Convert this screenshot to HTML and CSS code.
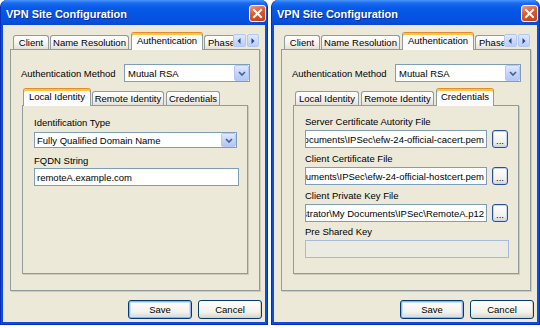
FILE: index.html
```html
<!DOCTYPE html>
<html lang="en">
<head>
  <meta charset="UTF-8">
  <title>VPN Site Configuration</title>
  <link rel="stylesheet" href="styles.css">
</head>
<body>
  <!-- Local identity page -->
  <div class="dialog">
    <div class="titlebar">
      <span class="title">VPN Site Configuration</span>
      <div class="close">
        <svg width="11" height="11" viewBox="0 0 11 11"><path d="M2 2 L9 9 M9 2 L2 9" stroke="#fff" stroke-width="2" stroke-linecap="square"/></svg>
      </div>
    </div>
    <div class="window-body">
      <div class="tabs">
        <div class="tab t-client">Client</div>
        <div class="tab t-name">Name Resolution</div>
        <div class="tab t-auth active">Authentication</div>
        <div class="tab t-phase">Phase 1</div>
        <div class="scroller">
          <span><svg width="4" height="6" viewBox="0 0 4 6"><path d="M3.5 0 L0.5 3 L3.5 6 Z" fill="#2f4380"/></svg></span>
          <span><svg width="4" height="6" viewBox="0 0 4 6"><path d="M0.5 0 L3.5 3 L0.5 6 Z" fill="#2f4380"/></svg></span>
        </div>
      </div>
      <div class="panel">
        <div class="method-row">
          <span>Authentication Method</span>
          <div class="combo method">
            <span>Mutual RSA</span>
            <div class="drop"><svg width="8" height="5" viewBox="0 0 8 5"><path d="M1 1 L4 4 L7 1" fill="none" stroke="#4d6185" stroke-width="1.7"/></svg></div>
          </div>
        </div>
        <div class="tabs inner">
          <div class="tab t-local active">Local Identity</div>
          <div class="tab t-remote">Remote Identity</div>
          <div class="tab t-cred">Credentials</div>
        </div>
        <div class="subpanel local">
          <div class="label">Identification Type</div>
          <div class="combo id-type">
            <span>Fully Qualified Domain Name</span>
            <div class="drop"><svg width="8" height="5" viewBox="0 0 8 5"><path d="M1 1 L4 4 L7 1" fill="none" stroke="#4d6185" stroke-width="1.7"/></svg></div>
          </div>
          <div class="label fqdn-label">FQDN String</div>
          <div class="textbox fqdn">remoteA.example.com</div>
        </div>
      </div>
      <div class="buttons">
        <button class="btn default">Save</button>
        <button class="btn">Cancel</button>
      </div>
    </div>
  </div>

  <!-- Credentials page -->
  <div class="dialog dlg-cred">
    <div class="titlebar">
      <span class="title">VPN Site Configuration</span>
      <div class="close">
        <svg width="11" height="11" viewBox="0 0 11 11"><path d="M2 2 L9 9 M9 2 L2 9" stroke="#fff" stroke-width="2" stroke-linecap="square"/></svg>
      </div>
    </div>
    <div class="window-body">
      <div class="tabs">
        <div class="tab t-client">Client</div>
        <div class="tab t-name">Name Resolution</div>
        <div class="tab t-auth active">Authentication</div>
        <div class="tab t-phase">Phase 1</div>
        <div class="scroller">
          <span><svg width="4" height="6" viewBox="0 0 4 6"><path d="M3.5 0 L0.5 3 L3.5 6 Z" fill="#2f4380"/></svg></span>
          <span><svg width="4" height="6" viewBox="0 0 4 6"><path d="M0.5 0 L3.5 3 L0.5 6 Z" fill="#2f4380"/></svg></span>
        </div>
      </div>
      <div class="panel">
        <div class="method-row">
          <span>Authentication Method</span>
          <div class="combo method">
            <span>Mutual RSA</span>
            <div class="drop"><svg width="8" height="5" viewBox="0 0 8 5"><path d="M1 1 L4 4 L7 1" fill="none" stroke="#4d6185" stroke-width="1.7"/></svg></div>
          </div>
        </div>
        <div class="tabs inner">
          <div class="tab t-local">Local Identity</div>
          <div class="tab t-remote">Remote Identity</div>
          <div class="tab t-cred active">Credentials</div>
        </div>
        <div class="subpanel creds">
          <div class="label">Server Certificate Autority File</div>
          <div class="file-row">
            <div class="textbox path"><span>C:\Documents and Settings\Administrator\My Documents\IPSec\efw-24-official-cacert.pem</span></div>
            <button class="browse">...</button>
          </div>
          <div class="label gap">Client Certificate File</div>
          <div class="file-row">
            <div class="textbox path"><span>C:\Documents and Settings\Administrator\My Documents\IPSec\efw-24-official-hostcert.pem</span></div>
            <button class="browse">...</button>
          </div>
          <div class="label gap">Client Private Key File</div>
          <div class="file-row">
            <div class="textbox path"><span>C:\Documents and Settings\Administrator\My Documents\IPSec\RemoteA.p12</span></div>
            <button class="browse">...</button>
          </div>
          <div class="label gap psk-label">Pre Shared Key</div>
          <div class="textbox disabled psk"></div>
        </div>
      </div>
      <div class="buttons">
        <button class="btn default">Save</button>
        <button class="btn">Cancel</button>
      </div>
    </div>
  </div>
</body>
</html>
```

FILE: styles.css
```css
/* Windows XP style dialogs */
* {
  margin: 0;
  padding: 0;
  box-sizing: border-box;
}

body {
  width: 540px;
  height: 328px;
  background: #fff;
  display: flex;
  gap: 3px;
  overflow: hidden;
  font-family: "Liberation Sans", Arial, sans-serif;
  font-size: 9.5px;
  color: #000;
}

.dialog {
  width: 268px;
  height: 325px;
  display: flex;
  flex-direction: column;
  background: #0a4ee0;
  border: 1px solid #0a2fb4;
  border-top: none;
  border-radius: 7px 7px 0 0;
  overflow: hidden;
}

.dlg-cred {
  width: 269px;
}

.titlebar {
  height: 25px;
  flex-shrink: 0;
  display: flex;
  align-items: center;
  justify-content: space-between;
  padding: 2px 2px 0 6px;
  margin: 0 -1px;
  background: linear-gradient(180deg, #4a97fa 0, #1a6cf0 3px, #0759e8 8px, #0454e4 16px, #0650dc 22px, #0a45cc 25px);
  color: #fff;
  font-size: 11px;
  font-weight: bold;
  text-shadow: 1px 1px 0 #0c2a90;
}

.close {
  width: 17px;
  height: 17px;
  border: 1px solid #fff;
  border-radius: 3px;
  background: linear-gradient(160deg, #ee9a7c, #dd5a30 45%, #c23c14);
  display: flex;
  align-items: center;
  justify-content: center;
}

.close svg {
  display: block;
}

.window-body {
  flex: 1;
  margin: 0 2px 2px;
  background: #ece9d8;
  padding: 7px 3px 0 7px;
  display: flex;
  flex-direction: column;
}

/* Tabs */
.tabs {
  display: flex;
  align-items: flex-end;
  height: 17px;
  padding-left: 3px;
  position: relative;
  z-index: 1;
}

.tab {
  height: 14px;
  border: 1px solid #919b9c;
  border-bottom: none;
  border-radius: 3px 3px 0 0;
  background: linear-gradient(#fff, #f4f3ee 55%, #e3e1d6);
  display: flex;
  align-items: center;
  justify-content: center;
  white-space: nowrap;
  overflow: hidden;
}

.tab.active {
  height: 18px;
  margin-bottom: -1px;
  padding-bottom: 2px;
  background: #fcfcfe;
  border-top: 1px solid #e68b2c;
  box-shadow: inset 0 2px 0 #ffc83c;
}

.t-client { width: 36px; margin-right: 1px; }
.t-name { width: 79px; margin-right: 2px; }
.t-auth { width: 72px; margin-right: 1px; }

.t-phase {
  width: 29px;
  justify-content: flex-start;
  padding-left: 3px;
  border-right: none;
  border-radius: 3px 0 0 0;
}

.scroller {
  display: flex;
  gap: 1px;
  width: 26px;
  height: 13px;
  margin-bottom: 2px;
}

.scroller span {
  flex: 1;
  display: flex;
  align-items: center;
  justify-content: center;
  background: linear-gradient(#dde8fe, #b9cdf8);
  border: 1px solid #b3c7f2;
  border-radius: 2px;
}

.panel {
  width: 250px;
  height: 242px;
  border: 1px solid #919b9c;
  box-shadow: 1px 1px 0 #cfcbbb;
  padding: 14px 0 0 0;
}

.method-row {
  display: flex;
  align-items: center;
  justify-content: space-between;
  padding: 0 9px 0 10px;
}

/* Inputs */
.combo {
  display: flex;
  align-items: center;
  border: 1px solid #7f9db9;
  background: #fff;
  padding-left: 3px;
  white-space: nowrap;
}

.combo.method {
  width: 126px;
  height: 18px;
}

.combo.id-type {
  width: 203px;
  height: 16px;
  margin-top: 3px;
  padding-left: 2px;
}

.drop {
  margin-left: auto;
  width: 15px;
  height: 100%;
  display: flex;
  align-items: center;
  justify-content: center;
  background: linear-gradient(#e0e9fe, #c0d2f9 60%, #b1c7f6);
  border: 1px solid #b7c9f3;
  border-radius: 2px;
}

.tabs.inner {
  margin: 6px 0 0 11px;
  padding-left: 1px;
}

.t-local { width: 68px; margin-right: 1px; }
.t-remote { width: 72px; margin-right: 2px; }
.t-cred { width: 54px; }

.dlg-cred .tabs.inner { padding-left: 2px; }
.dlg-cred .t-local { width: 64px; margin-right: 2px; }
.dlg-cred .t-remote { width: 73px; margin-right: 2px; }
.dlg-cred .t-cred { width: 58px; }

.subpanel {
  width: 226px;
  height: 169px;
  margin-left: 11px;
  border: 1px solid #919b9c;
  box-shadow: 1px 1px 0 #cfcbbb;
  padding: 11px 0 0 11px;
}

.subpanel.creds {
  padding-top: 10px;
}

.label {
  height: 12px;
  line-height: 12px;
  white-space: nowrap;
}

.fqdn-label {
  margin-top: 7px;
}

.textbox {
  height: 18px;
  border: 1px solid #7f9db9;
  background: #fff;
  display: flex;
  align-items: center;
  padding: 0 2px;
  white-space: nowrap;
  overflow: hidden;
}

.textbox.fqdn {
  width: 205px;
  margin-top: 1px;
}

.file-row {
  display: flex;
  gap: 5px;
  margin-top: 2px;
}

.textbox.path {
  width: 182px;
  justify-content: flex-end;
}

.textbox.path span {
  flex-shrink: 0;
}

.label.gap {
  margin-top: 5px;
}

.label.gap:nth-of-type(2) {
  margin-top: 6px;
}

.label.psk-label {
  margin-top: 4px;
}

.textbox.disabled {
  width: 204px;
  margin-top: 2px;
  background: #ebeae3;
  border-color: #a9bbd3;
}

/* Buttons */
button {
  font-family: inherit;
  font-size: inherit;
  color: #000;
}

.browse {
  width: 16px;
  height: 18px;
  border: 1px solid #2a4f9c;
  border-radius: 3px;
  background: linear-gradient(#fff, #f1f0ea 70%, #d8d3c7);
  box-shadow: inset 0 0 0 1px #c4d6f6;
  line-height: 8px;
  padding-top: 4px;
}

.buttons {
  display: flex;
  justify-content: flex-end;
  gap: 6px;
  margin-top: 9px;
}

.btn {
  width: 64px;
  height: 19px;
  border: 1px solid #003c74;
  border-radius: 3px;
  background: linear-gradient(#fff, #f3f2ec 65%, #d9d4c8);
  box-shadow: inset -1px -1px 0 #d6d0c5;
}

.btn.default {
  box-shadow: inset 0 0 0 1px #92b2ee, inset 0 0 0 2px #cfe0fb;
}
```
